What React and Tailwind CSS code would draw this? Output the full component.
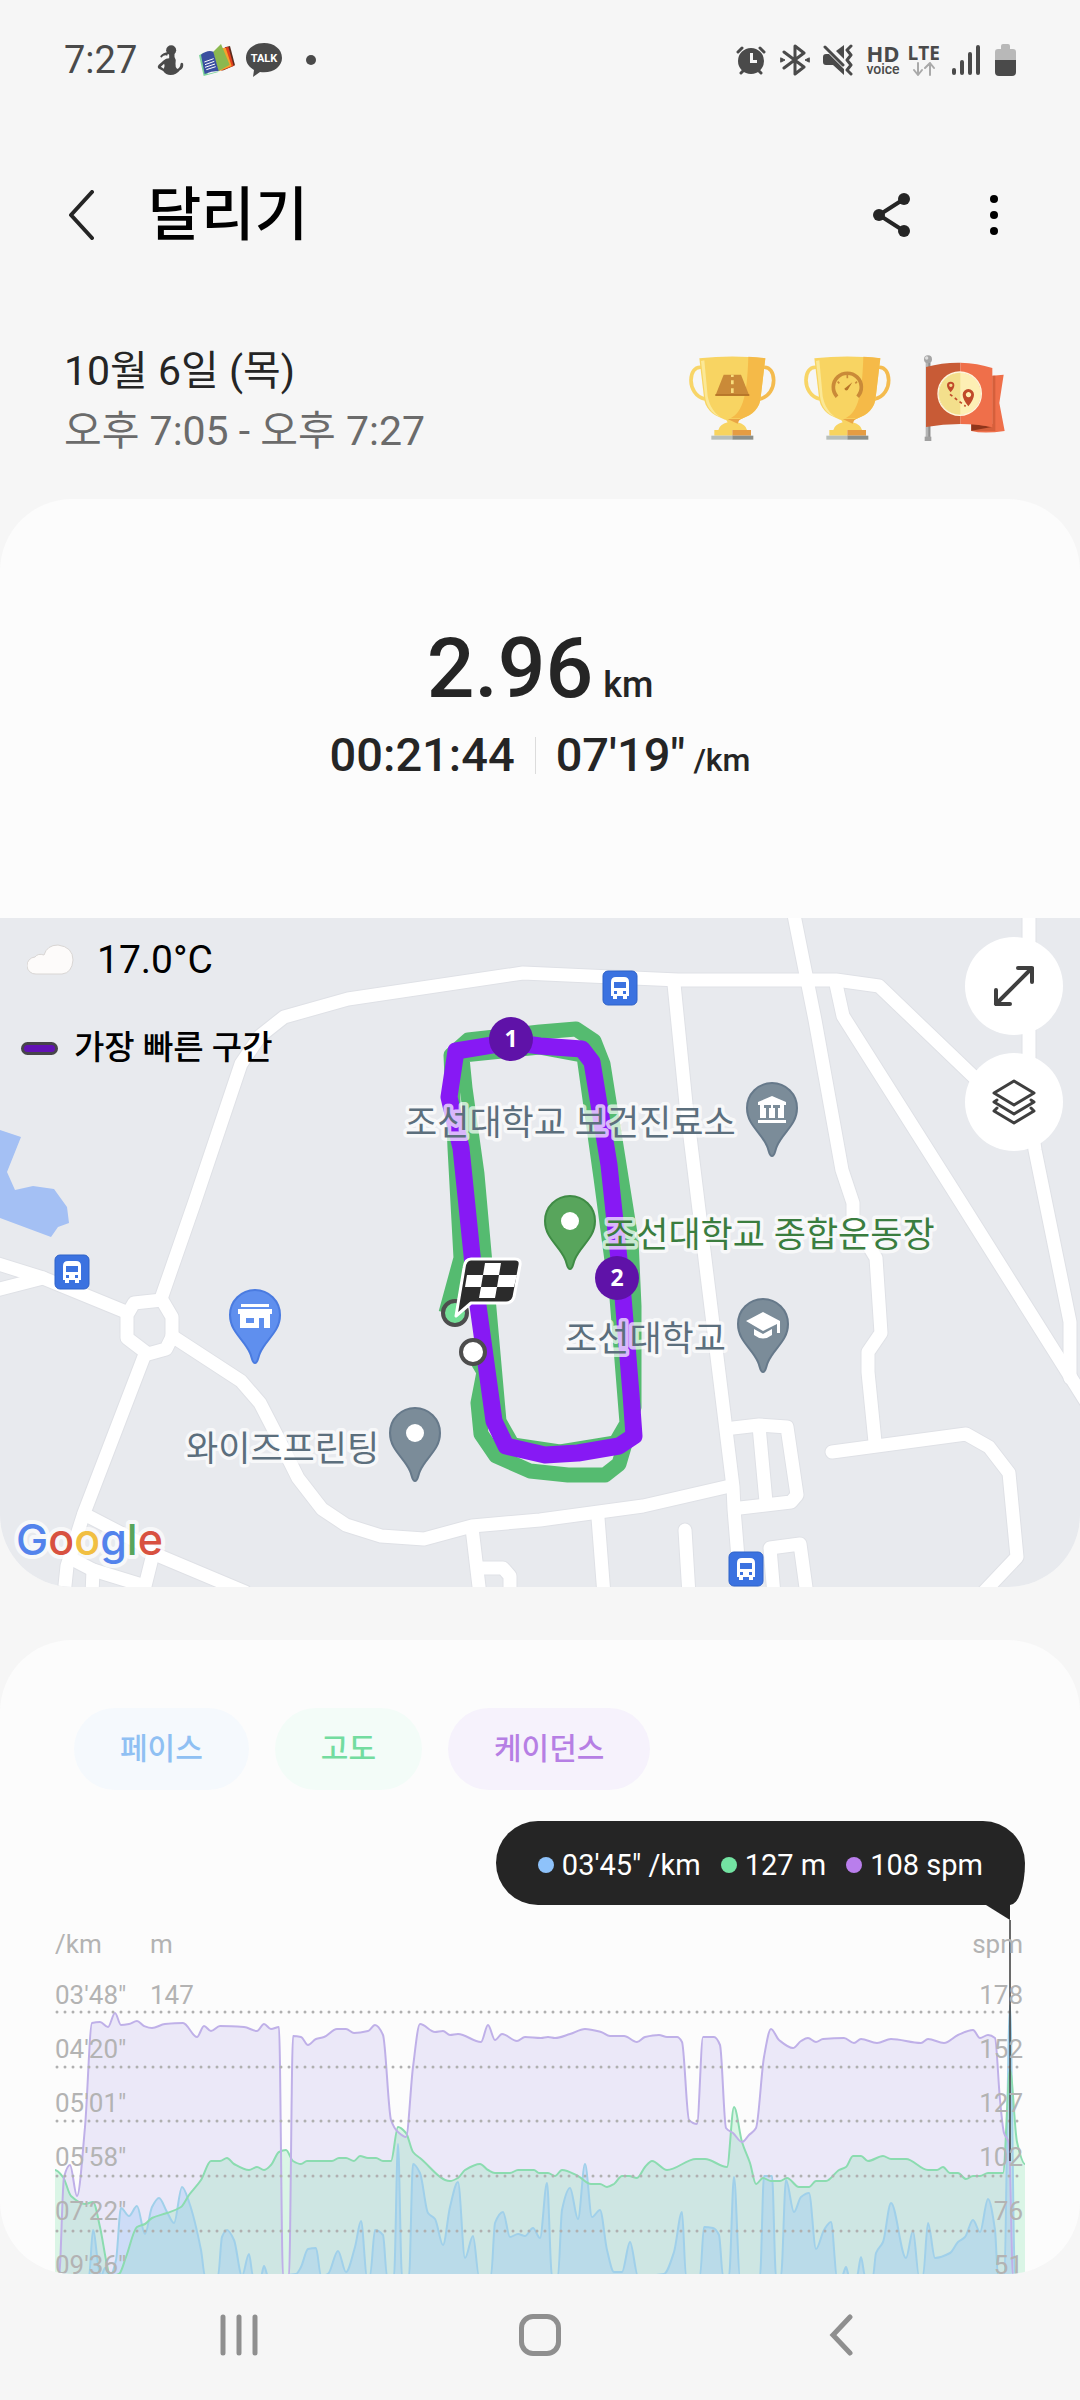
// src/pages/RunDetailPage.jsx
import { useState } from "react";

const ROADS = [
  "M162 378 L195 283 L241 146 L260 118 L284 99 L348 81 L523 55 L678 62 L836 62 L879 68 L975 160 L1030 200",
  "M1029 -8 V190 L1035 232 L1070 404 V460",
  "M836 66 L843 98 L960 283 L1090 490",
  "M793 -8 L815 102 L842 252 L853 285 V302 L876 340 L881 415 L868 434 V454 L875 524",
  "M674 66 L686 186 L733 569 L734 591 L738 640",
  "M832 534 L966 516 L989 529 L1009 555 L1017 639 L981 677",
  "M172 418 L241 463 L260 485 L276 516 L298 560 L322 591 L346 607 L381 618 L424 621 L472 608 L540 602 L643 588 L730 568",
  "M-8 344 L43 360 L126 394",
  "M-8 373 L43 360",
  "M145 436 L84 595 L67 648 L64 677",
  "M84 596 L138 624 L157 637 L245 674",
  "M70 640 L93 652 L145 668 L152 640",
  "M93 652 L92 677",
  "M472 610 L480 677",
  "M480 650 L503 650 L510 658 V677",
  "M598 600 L604 677",
  "M685 612 L689 677",
  "M733 510 L759 507 L787 509 L797 577 L791 584 L740 590",
  "M759 508 L766 584",
  "M774 677 L770 630 L800 626 L807 677",
  "M134 385 L162 382 L172 399 V419 L166 431 L148 436 L127 420 V397 Z",
];

const GREEN_TRACK =
  "M446 395 L461 340 L455 230 L451 137 L468 122 L540 114 L576 111 L594 123 L603 146 L631 322 L634 388 V489 L624 529 L619 546 L605 557 H568 L530 553 L496 538 L481 516 L478 485 L484 454 L474 437";
const GREEN_LAP =
  "M463 140 L466 170 L478 256 L500 503 L513 526 L560 533 L615 524 L626 505 L616 380 L600 260 L583 138 L540 130 L463 138";
const PURPLE_TRACK =
  "M456 133 L449 179 L461 230 L475 366 L494 503 L506 528 L545 537 L578 535 L619 528 L634 518 L631 476 L623 379 L609 247 L592 144 L582 131 L540 128 L511 124 Z";

const PIN_COLORS = {
  gray: ["#7b8c99", "#66798a"],
  green: ["#58a55c", "#3f8b45"],
  blue: ["#5f8fee", "#4a7be0"],
};

const CADENCE = [
  [4, 356], [9, 257], [15, 245], [22, 276], [30, 207], [37, 103], [45, 102], [53, 107], [60, 93], [66, 105], [74, 104],
  [82, 101], [89, 106], [97, 108], [110, 104], [128, 103], [142, 117], [149, 106], [156, 111], [165, 106], [189, 107],
  [202, 111], [209, 104], [216, 109], [224, 107], [228, 356], [234, 356], [238, 116], [246, 117], [253, 125], [261, 119],
  [269, 117], [282, 109], [291, 109], [299, 113], [313, 111], [320, 105], [328, 115], [336, 200], [343, 212], [351, 217],
  [358, 147], [365, 104], [380, 112], [388, 111], [395, 115], [403, 114], [426, 122], [433, 105], [440, 120], [447, 114],
  [462, 121], [470, 117], [486, 118], [493, 117], [500, 118], [515, 114], [530, 109], [546, 112], [555, 116], [569, 116],
  [582, 122], [590, 117], [604, 115], [612, 117], [622, 117], [627, 122], [634, 200], [642, 204], [648, 117], [659, 117],
  [665, 125], [671, 208], [678, 213], [687, 222], [694, 215], [701, 208], [709, 137], [716, 109], [724, 120], [738, 128],
  [746, 121], [753, 118], [761, 122], [768, 119], [789, 118], [799, 123], [806, 119], [822, 123], [836, 119], [866, 123],
  [873, 119], [889, 123], [903, 115], [918, 110], [925, 118], [933, 115], [940, 118], [945, 180], [949, 213], [954, 223],
  [958, 356],
];

const ALTITUDE = [
  [0, 250], [8, 257], [16, 276], [30, 284], [38, 282], [45, 307], [52, 345], [55, 356], [64, 354], [71, 337], [82, 307],
  [90, 304], [97, 298], [112, 293], [126, 287], [134, 275], [146, 260], [156, 241], [165, 241], [172, 238], [179, 244],
  [194, 250], [202, 247], [209, 250], [216, 245], [224, 232], [231, 230], [238, 241], [246, 244], [252, 241], [277, 241],
  [284, 238], [291, 238], [299, 241], [305, 236], [313, 238], [321, 238], [328, 241], [336, 241], [343, 207], [351, 213],
  [358, 232], [365, 238], [395, 261], [403, 258], [410, 250], [425, 244], [433, 250], [440, 253], [455, 253], [463, 250],
  [479, 250], [484, 253], [493, 253], [500, 256], [507, 250], [523, 256], [536, 264], [545, 264], [552, 267], [559, 264],
  [567, 256], [574, 256], [582, 258], [590, 247], [597, 241], [612, 250], [641, 239], [650, 239], [672, 247], [679, 187],
  [687, 222], [695, 243], [701, 264], [708, 258], [716, 261], [725, 261], [732, 258], [744, 267], [754, 267], [761, 261],
  [771, 261], [784, 250], [791, 247], [798, 236], [806, 236], [813, 241], [828, 236], [836, 239], [851, 239], [873, 250],
  [882, 250], [888, 247], [895, 253], [903, 253], [911, 259], [918, 256], [925, 256], [933, 253], [948, 253], [955, 150],
  [962, 222], [970, 244],
];

const PACE = [
  [34, 356], [38, 310], [44, 350], [46, 356], [50, 348], [55, 356], [61, 340], [66, 288], [74, 296], [82, 286], [90, 314],
  [97, 287], [104, 278], [112, 292], [119, 303], [127, 267], [134, 282], [146, 330], [150, 356], [163, 356], [167, 317],
  [172, 310], [179, 320], [187, 356], [194, 334], [198, 356], [206, 356], [209, 346], [213, 356], [241, 354], [246, 347],
  [253, 329], [261, 328], [266, 356], [273, 354], [283, 331], [291, 352], [300, 327], [306, 301], [312, 356], [315, 356],
  [320, 310], [328, 315], [332, 356], [339, 356], [343, 224], [347, 356], [354, 356], [358, 244], [365, 253], [373, 293],
  [380, 299], [388, 325], [395, 287], [403, 262], [410, 338], [418, 316], [424, 356], [436, 356], [440, 303], [448, 292],
  [455, 317], [463, 314], [470, 316], [478, 308], [485, 318], [492, 263], [497, 356], [503, 356], [507, 290], [515, 268],
  [523, 299], [530, 244], [537, 297], [545, 290], [552, 330], [559, 352], [567, 352], [575, 322], [583, 356], [609, 354],
  [619, 332], [627, 292], [631, 356], [645, 356], [649, 307], [658, 308], [664, 315], [668, 356], [674, 356], [679, 257],
  [685, 356], [705, 356], [709, 256], [717, 256], [721, 356], [726, 356], [731, 260], [739, 292], [746, 277], [754, 273],
  [761, 329], [769, 310], [776, 302], [782, 356], [787, 356], [791, 347], [794, 356], [802, 356], [806, 337], [810, 356],
  [818, 356], [821, 333], [828, 322], [836, 283], [851, 338], [858, 311], [864, 356], [868, 356], [873, 303], [880, 338],
  [895, 333], [903, 322], [910, 317], [918, 300], [925, 312], [933, 279], [940, 310], [943, 356], [949, 356], [955, 85],
  [960, 356],
];

const AXIS_ROWS = [
  { pace: "03'48\"", alt: "147", cadence: "178" },
  { pace: "04'20\"", alt: "", cadence: "152" },
  { pace: "05'01\"", alt: "", cadence: "127" },
  { pace: "05'58\"", alt: "", cadence: "102" },
  { pace: "07'22\"", alt: "", cadence: "76" },
  { pace: "09'36\"", alt: "", cadence: "51" },
];

const GRID_LINES = [92, 147, 201, 256, 311];

// Monotone cubic through the points, so peaks stay round and never overshoot
function smoothPath(points) {
  const slope = points.slice(1).map((p, i) => (p[1] - points[i][1]) / (p[0] - points[i][0]));
  const tangent = points.map((_, i) => {
    const a = slope[i - 1];
    const b = slope[i];
    if (a === undefined || b === undefined || a * b <= 0) return 0;
    return (2 * a * b) / (a + b);
  });
  let d = `M${points[0][0]} ${points[0][1]}`;
  for (let i = 1; i < points.length; i++) {
    const [x0, y0] = points[i - 1];
    const [x1, y1] = points[i];
    const h = (x1 - x0) / 3;
    d += ` C${x0 + h} ${y0 + h * tangent[i - 1]} ${x1 - h} ${y1 - h * tangent[i]} ${x1} ${y1}`;
  }
  return d;
}

function areaPath(points) {
  return `${smoothPath(points)} V360 H${points[0][0]} Z`;
}

function StatusBar() {
  return (
    <div className="flex h-[120px] items-center justify-between px-16 text-[#4a4a4a]">
      <div className="flex items-center">
        <span className="text-[38px] leading-10">7:27</span>
        <svg className="ml-5 h-[30px] w-[27px]" viewBox="0 0 80 90" fill="currentColor">
          <circle cx="42" cy="16" r="15" />
          <path d="M9 34 Q18 22 34 22 L30 32 Q22 28 12 38 Z" />
          <path
            fillRule="evenodd"
            d="M36 26 H52 V36 Q58 44 55 56 Q54 66 60 72 Q70 68 70 56 Q74 50 78 56 Q80 70 68 76 Q58 90 40 90 Q26 90 18 78 L3 70 Q0 65 4 60 L20 46 Q26 40 36 40 Z M11 65 L20 71 Q24 62 21 56 Z"
          />
        </svg>
        <svg className="ml-[14px] h-8 w-[38px]" viewBox="0 0 108 96">
          <path d="M78 10 L93 6 L108 64 L70 80 Z" fill="#5b2a1c" />
          <path d="M74 12 L88 8 L104 66 L66 80 Z" fill="#e2401f" />
          <path d="M66 12 L80 12 L98 66 L60 82 Z" fill="#f6a12c" />
          <path d="M0 34 L14 26 L26 90 L58 82 L58 84 L14 96 Z" fill="#7cd39a" />
          <path d="M42 24 L66 0 L92 62 L58 82 Z" fill="#8bb84f" />
          <path d="M6 32 Q26 16 43 23 L59 81 Q40 80 17 90 Z" fill="#3a4f9f" />
          <path d="M16 54 L44 44 M18 62 L46 52 M18 70 L48 60 M22 77 L50 68" stroke="#fff" strokeWidth="3" />
        </svg>
        <svg className="ml-[10px] h-[34px] w-9" viewBox="0 0 36 34">
          <path
            fill="currentColor"
            d="M18 0 C8 0 0 6 0 15 C0 20 3 24 8 27 L7 34 L14 29 C26 31 36 24 36 15 C36 6 28 0 18 0 Z"
          />
          <text x="18" y="19" textAnchor="middle" fill="#fff" className="text-[11px] font-bold">
            TALK
          </text>
        </svg>
        <span className="ml-6 size-[10px] rounded-full bg-[#4a4a4a]" />
      </div>

      <div className="flex items-center">
        <svg className="h-[30px] w-[30px]" viewBox="0 0 30 30" fill="currentColor">
          <path d="M2 7 L6 3 M28 7 L24 3 M5 28 L8 25 M25 28 L22 25" stroke="currentColor" strokeWidth="3" strokeLinecap="round" />
          <path
            fillRule="evenodd"
            d="M15 3 A13 13 0 1 0 15 29 A13 13 0 1 0 15 3 Z M14 8 H17 V15 H21 V18 H14 Z"
          />
        </svg>
        <svg className="ml-[14px] h-8 w-[30px]" viewBox="0 0 30 32" fill="none" stroke="currentColor" strokeWidth="3" strokeLinejoin="round" strokeLinecap="round">
          <path d="M4 8 L24 23 L15 30 V2 L24 9 L4 24" />
          <path d="M1 14 L5 16 L1 18 Z M29 14 L25 16 L29 18 Z" fill="currentColor" strokeWidth="1" />
        </svg>
        <svg className="ml-[13px] h-8 w-[31px]" viewBox="0 0 31 32" fill="currentColor">
          <path d="M0 13 Q0 10 3 10 H6 L21 25 V31 L10 21 H3 Q0 21 0 18 Z" />
          <path d="M21 1 V15 L13 7 Z" />
          <path d="M2 3 L20 21" stroke="currentColor" strokeWidth="3" strokeLinecap="round" />
          <path d="M28 2 L24 6 L28 11 L24 16 L28 21 L24 26 L28 30" fill="none" stroke="currentColor" strokeWidth="3" strokeLinejoin="round" strokeLinecap="round" />
        </svg>
        <span className="ml-3 flex flex-col items-center">
          <span className="font-['Open_Sans',sans-serif] text-[22px] leading-[17px] font-bold">HD</span>
          <span className="text-[14px] leading-[14px] font-medium">voice</span>
        </span>
        <span className="ml-2 flex flex-col items-center">
          <span className="font-['Open_Sans',sans-serif] text-[19px] leading-[17px] font-bold">LTE</span>
          <svg className="h-[14px] w-[22px]" viewBox="0 0 22 14" fill="none" stroke="#a9a9a9" strokeWidth="2" strokeLinecap="round" strokeLinejoin="round">
            <path d="M5 1 V13 M1 8 L5 13 L9 8 M17 13 V1 M12 6 L17 1 L21 6" />
          </svg>
        </span>
        <svg className="ml-3 h-[30px] w-7" viewBox="0 0 28 30" stroke="currentColor" strokeWidth="4" strokeLinecap="round">
          <path d="M2 25 V28 M10 17 V28 M18 9 V28 M26 2 V28" />
        </svg>
        <svg className="ml-[15px] h-8 w-[21px]" viewBox="0 0 21 32">
          <path d="M6 2 Q6 0 8 0 H13 Q15 0 15 2 V5 H18 Q21 5 21 8 V16 H0 V8 Q0 5 3 5 H6 Z" fill="#b8b8b8" />
          <path d="M0 16 H21 V28 Q21 32 17 32 H4 Q0 32 0 28 Z" fill="currentColor" />
        </svg>
      </div>
    </div>
  );
}

function Header() {
  return (
    <header className="flex h-[190px] items-center pr-[74px] pl-16">
      <button type="button" aria-label="뒤로" className="flex w-9 items-center">
        <svg className="h-[50px] w-9" viewBox="0 0 36 50" fill="none" stroke="#252525" strokeWidth="4" strokeLinecap="round" strokeLinejoin="round">
          <path d="M28 2 L7 25 L28 48" />
        </svg>
      </button>
      <h1 className="ml-12 flex-1 text-[58px] leading-[64px] font-medium text-black">달리기</h1>
      <button type="button" aria-label="공유">
        <svg className="h-[46px] w-10" viewBox="0 0 40 46" fill="#252525">
          <path d="M32 7 L7 23 L32 39" fill="none" stroke="#252525" strokeWidth="4" />
          <circle cx="32" cy="7" r="6" />
          <circle cx="7" cy="23" r="6" />
          <circle cx="32" cy="39" r="6" />
        </svg>
      </button>
      <button type="button" aria-label="더보기" className="ml-[70px]">
        <svg className="h-[46px] w-6" viewBox="0 0 24 46" fill="#000">
          <circle cx="12" cy="7" r="4" />
          <circle cx="12" cy="23" r="4" />
          <circle cx="12" cy="39" r="4" />
        </svg>
      </button>
    </header>
  );
}

function Trophy({ label, children }) {
  return (
    <svg className="h-[90px] w-[92px]" viewBox="0 0 276 270" role="img" aria-label={label}>
      <g fill="none" strokeWidth="11">
        <path d="M44 43 C22 40 12 60 12 82 C12 105 25 132 54 138" stroke="#f8d567" />
        <path d="M228 43 C250 40 260 60 260 82 C260 105 247 132 218 138" stroke="#f4bb4e" />
      </g>
      <path d="M37 16 Q136 5 235 16 L220 142 C212 178 184 190 158 200 H114 C88 190 60 178 52 142 Z" fill="#f8d462" />
      <path d="M184 11 Q212 12 235 16 L220 142 C212 178 184 190 158 200 H122 C165 182 180 140 184 11 Z" fill="#f5ba48" />
      <path d="M42 24 L52 22 L62 130 C68 160 82 180 100 192 C72 182 58 160 54 130 Z" fill="#fbe896" />
      <path d="M112 196 H160 Q154 202 152 208 Q176 214 180 231 H94 Q98 214 122 208 Q120 202 112 196 Z" fill="#f8d462" />
      <path d="M122 198 H160 Q154 204 152 212 Z" fill="#e9a545" />
      <path d="M82 231 H136 V248 H82 Z" fill="#f8d45f" />
      <path d="M136 231 H192 V248 H136 Z" fill="#e59c43" />
      <path d="M73 248 H136 V260 H73 Z" fill="#b7bfbc" />
      <path d="M136 248 H199 V260 H136 Z" fill="#8a8f8b" />
      {children}
    </svg>
  );
}

function RouteFlag() {
  return (
    <svg className="h-[90px] w-[92px]" viewBox="0 0 276 270" role="img" aria-label="경로">
      <path d="M26 28 H40 V252 H26 Z" fill="#b4b4b4" />
      <path d="M34 28 H40 V252 H34 Z" fill="#8f8f8f" />
      <circle cx="33" cy="19" r="12" fill="#a5a5a5" />
      <circle cx="29" cy="15" r="5" fill="#dedede" />
      <path d="M23 251 H43 V264 H23 Z" fill="#a0a0a0" />
      <path d="M226 68 L260 65 L247 150 L263 234 Q200 243 163 234 V213 H226 Z" fill="#ef6f4a" />
      <path d="M226 68 H235 V234 L163 234 V213 H226 Z" fill="#d55f3b" />
      <path d="M163 212 L224 222 Q190 228 163 233 Z" fill="#8f351b" />
      <path d="M27 42 Q78 28 130 29 V213 Q78 213 27 222 Z" fill="#c85b36" />
      <path d="M130 29 Q182 30 226 45 V223 Q182 213 130 213 Z" fill="#ef6f4a" />
      <circle cx="128" cy="122" r="64" fill="#fdefb4" />
      <path d="M130 58 A64 64 0 0 0 130 186 Z" fill="#f3df8c" />
      <circle cx="128" cy="122" r="65" fill="none" stroke="#fff6dc" strokeWidth="4" />
      <g fill="#c0492a">
        <path fillRule="evenodd" d="M101 118 Q90 106 90 97 A11 11 0 1 1 112 97 Q112 106 101 118 Z M101 92 a5 5 0 1 0 1 0 Z" />
        <path fillRule="evenodd" d="M154 160 Q137 138 137 125 A17 17 0 1 1 171 125 Q171 138 154 160 Z M154 117 a8 8 0 1 0 1 0 Z" />
      </g>
      <path d="M99 124 L146 160" stroke="#c0492a" strokeWidth="5" strokeDasharray="9 9" />
    </svg>
  );
}

function DateRow() {
  return (
    <section className="flex items-start justify-between px-16 pt-[31px] pb-[38px]">
      <div className="text-[41px] leading-[60px]">
        <p className="text-[#252525]">10월 6일 (목)</p>
        <p className="text-[#6b6b6b]">오후 7:05 - 오후 7:27</p>
      </div>
      <div className="mt-3 mr-[7px] flex gap-[23px]">
        <Trophy label="최장 거리">
          <path d="M110 65 H162 L187 128 H85 Z" fill="#ca8a38" />
          <path d="M85 124 H187 V128 H85 Z" fill="#b06f25" />
          <path d="M136 65 V72 M136 82 V94 M136 106 V120" stroke="#f8dc7c" strokeWidth="8" />
        </Trophy>
        <Trophy label="최고 속도">
          <path d="M105 131 A42 42 0 1 1 167 131" fill="none" stroke="#ca8a38" strokeWidth="11" />
          <path d="M136 66 V76 M107 86 L112 91 M165 86 L160 91" stroke="#ca8a38" strokeWidth="5" />
          <path d="M151 88 L137 111 Q130 115 127 107 Z" fill="#b87529" />
        </Trophy>
        <RouteFlag />
      </div>
    </section>
  );
}

function Summary() {
  return (
    <div className="flex flex-col items-center pt-[120px] pb-[133px] font-medium text-[#252525]">
      <p className="text-[84px] leading-[100px]">
        2.96
        <span className="ml-[10px] text-[36px] leading-none">km</span>
      </p>
      <div className="mt-[6px] flex items-center text-[47px] leading-[60px]">
        <span>00:21:44</span>
        <span className="mx-5 h-[37px] w-px bg-[#dcdcdc]" />
        <span>
          07'19"
          <span className="ml-2 text-[32px] leading-none">/km</span>
        </span>
      </div>
    </div>
  );
}

function Pin({ x, y, color, children }) {
  const [fill, stroke] = PIN_COLORS[color];
  return (
    <g transform={`translate(${x} ${y})`}>
      <path
        d="M0 48 C-3 48 -3 42 -5 38 C-11 24 -25 17 -25 0 A25 25 0 1 1 25 0 C25 17 11 24 5 38 C3 42 3 48 0 48 Z"
        fill={fill}
        stroke={stroke}
        strokeWidth="2"
      />
      {children || <circle r="9" fill="#fff" />}
    </g>
  );
}

function BusStop({ x, y }) {
  return (
    <g transform={`translate(${x} ${y})`}>
      <rect x="-17" y="-17" width="34" height="34" rx="5" fill="#3b72e0" stroke="#2f62c8" />
      <path
        fill="#fff"
        fillRule="evenodd"
        d="M-9 -6 Q-9 -11 -4 -11 H4 Q9 -11 9 -6 V8 H7 V11 H3 V8 H-3 V11 H-7 V8 H-9 Z M-6 -6 V0 H6 V-6 Z M-6 3 V6 H-3 V3 Z M3 3 V6 H6 V3 Z"
      />
    </g>
  );
}

function MapLabel({ x, y, color, children }) {
  return (
    <text
      x={x}
      y={y}
      fill={color}
      stroke="#fff"
      strokeOpacity="0.7"
      strokeWidth="7"
      strokeLinejoin="round"
      paintOrder="stroke"
      className="text-[35px]"
    >
      {children}
    </text>
  );
}

function KmMarker({ x, y, n }) {
  return (
    <g transform={`translate(${x} ${y})`}>
      <circle r="22" fill="#5f12a8" />
      <text y="8" textAnchor="middle" fill="#fff" className="font-['Open_Sans',sans-serif] text-[23px] font-bold">
        {n}
      </text>
    </g>
  );
}

function RouteMap() {
  return (
    <div className="relative h-[669px] bg-[#e8eaee]">
      <svg className="absolute inset-0 h-full w-full" viewBox="0 0 1080 669" preserveAspectRatio="xMidYMid slice">
        <path d="M0 212 L21 219 L7 254 L15 272 L33 268 L54 271 L67 289 L69 305 L58 309 L51 319 L0 300 Z" fill="#a4c0f4" />
        <g fill="none" strokeLinecap="round" strokeLinejoin="round">
          <g stroke="#dfe1e6" strokeWidth="15">
            {ROADS.map((d) => (
              <path key={d} d={d} />
            ))}
          </g>
          <g stroke="#fff" strokeWidth="13">
            {ROADS.map((d) => (
              <path key={d} d={d} />
            ))}
          </g>
        </g>

        {/* Track */}
        <g fill="none" strokeLinejoin="round">
          <path d={GREEN_LAP} stroke="#55bb70" strokeWidth="13" />
          <path d={GREEN_TRACK} stroke="#55bb70" strokeWidth="15" />
          <path d={PURPLE_TRACK} stroke="#8719f4" strokeWidth="17" />
        </g>

        <BusStop x={72} y={354} />
        <BusStop x={620} y={70} />
        <BusStop x={746} y={651} />

        <MapLabel x={405} y={217} color="#5c6f7d">조선대학교 보건진료소</MapLabel>
        <MapLabel x={604} y={329} color="#3a7d3f">조선대학교 종합운동장</MapLabel>
        <MapLabel x={565} y={433} color="#5c6f7d">조선대학교</MapLabel>
        <MapLabel x={186} y={543} color="#5c6f7d">와이즈프린팅</MapLabel>

        <Pin x={772} y={190} color="gray">
          <path
            fill="#fff"
            fillRule="evenodd"
            d="M-14 -6 L0 -12 L14 -6 V-3 H12 V10 H-12 V-3 H-14 Z M-8 -3 V0 H-6 V10 H-3 V0 H-1 V-3 Z M1 -3 V0 H3 V10 H6 V0 H8 V-3 Z M-14 12 H14 V15 H-14 Z"
          />
        </Pin>
        <Pin x={570} y={303} color="green" />
        <Pin x={763} y={406} color="gray">
          <path fill="#fff" d="M0 -12 L17 -3 V9 H14 V0 L0 7 L-17 -3 Z M-9 5 L0 10 L9 5 V11 Q0 18 -9 11 Z" />
        </Pin>
        <Pin x={415} y={515} color="gray" />
        <Pin x={255} y={397} color="blue">
          <path
            fill="#fff"
            fillRule="evenodd"
            d="M-14 -11 H14 V-8 H-14 Z M-17 -6 H17 V-1 H15 V13 H9 V3 H4 V13 H-15 V-1 H-17 Z M-9 3 V8 H-1 V3 Z"
          />
        </Pin>

        <KmMarker x={511} y={121} n="1" />
        <KmMarker x={617} y={360} n="2" />

        <circle cx="455" cy="395" r="12" fill="#74df96" stroke="#4d4d4d" strokeWidth="4" />
        <circle cx="473" cy="434" r="12" fill="#fff" stroke="#4d4d4d" strokeWidth="4" />

        {/* Finish flag */}
        <path
          d="M471 341 H515 Q521 341 520 347 L514 379 Q512 385 506 385 H471 L456 398 L464 350 Q465 341 471 341 Z"
          fill="#2b2b2b"
          stroke="#fff"
          strokeWidth="3"
          strokeLinejoin="round"
        />
        <g fill="#fff">
          <path d="M485 345 H501 L499 357 H483 Z" />
          <path d="M467 357 H483 L481 369 H465 Z" />
          <path d="M499 357 H517 L514 369 H497 Z" />
          <path d="M481 369 H497 L495 380 H479 Z" />
        </g>

        <text
          x="16"
          y="637"
          stroke="#fff"
          strokeOpacity="0.7"
          strokeWidth="8"
          strokeLinejoin="round"
          paintOrder="stroke"
          className="font-['Inter',sans-serif] text-[43px] font-medium"
        >
          <tspan fill="#5383ec">G</tspan>
          <tspan fill="#d85140">o</tspan>
          <tspan fill="#f1bf42">o</tspan>
          <tspan fill="#5383ec">g</tspan>
          <tspan fill="#58a55c">l</tspan>
          <tspan fill="#d85140">e</tspan>
        </text>
      </svg>

      <div className="relative flex items-start justify-between pt-[19px] pr-[17px] pl-[21px] text-black">
        <div>
          <p className="flex h-[46px] items-center text-[39px] leading-[46px]">
            <svg className="mr-[22px] ml-[6px] h-8 w-12" viewBox="0 0 48 32">
              <path
                d="M9 30 A8 8 0 0 1 8 13 Q11 9 17 11 Q20 1 31 1 Q46 3 46 16 Q45 29 35 30 Z"
                fill="#fdfbfa"
                stroke="#d9d6d4"
              />
            </svg>
            17.0°C
          </p>
          <p className="mt-[42px] flex h-[46px] items-center text-[33px] leading-[46px] font-medium">
            <span className="mr-4 h-[13px] w-[37px] rounded-full border-3 border-[#47454a] bg-[#6212b4]" />
            가장 빠른 구간
          </p>
        </div>
        <div className="flex flex-col gap-[18px]">
          <button type="button" aria-label="지도 확대" className="flex size-[98px] items-center justify-center rounded-full bg-white">
            <svg className="size-[42px]" viewBox="0 0 42 42" fill="none" stroke="#3f3f3f" strokeWidth="4" strokeLinecap="round" strokeLinejoin="round">
              <path d="M25 3 H39 V17 M39 3 L3 39 M3 25 V39 H17" />
            </svg>
          </button>
          <button type="button" aria-label="지도 유형" className="flex size-[98px] items-center justify-center rounded-full bg-white">
            <svg className="h-[46px] w-11" viewBox="0 0 44 46" fill="none" stroke="#3f3f3f" strokeWidth="3" strokeLinecap="round" strokeLinejoin="round">
              <path d="M22 2 L42 14 L22 26 L2 14 Z" />
              <path d="M5 21 L2 23 L22 35 L42 23 L39 21" />
              <path d="M5 29 L2 32 L22 44 L42 32 L39 29" />
            </svg>
          </button>
        </div>
      </div>
    </div>
  );
}

function ChartTooltip() {
  return (
    <div className="relative mt-[31px] mr-[55px] mb-[15px] ml-auto flex h-[84px] w-fit items-center gap-5 rounded-[42px] rounded-br-[15px_42px] bg-[#252525] px-[42px] pt-1 text-[29px] leading-9 text-white">
      <span className="flex items-center gap-2">
        <span className="size-4 rounded-full bg-[#8ec2fa]" />
        03'45" /km
      </span>
      <span className="flex items-center gap-2">
        <span className="size-4 rounded-full bg-[#73e3a2]" />
        127 m
      </span>
      <span className="flex items-center gap-2">
        <span className="size-4 rounded-full bg-[#b97eec]" />
        108 spm
      </span>
      <svg className="absolute top-full right-[15px] h-[15px] w-6" viewBox="0 0 24 15">
        <path d="M0 0 H24 V15 Z" fill="#252525" />
      </svg>
    </div>
  );
}

function Chart({ shown }) {
  return (
    <div className="relative mx-[55px] h-[354px] overflow-hidden text-[26px] leading-[30px] text-[#b3b3b3]">
      <svg className="absolute inset-0 h-full w-full" viewBox="0 0 970 354" preserveAspectRatio="none" fill="none">
        {shown.cadence && <path d={areaPath(CADENCE)} fill="#ac9cec" fillOpacity="0.2" />}
        {shown.altitude && <path d={areaPath(ALTITUDE)} fill="#72e2a2" fillOpacity="0.24" />}
        {shown.pace && <path d={areaPath(PACE)} fill="#8fc5f5" fillOpacity="0.32" />}
        <g strokeWidth="2">
          {shown.pace && <path d={smoothPath(PACE)} stroke="#a0d0ea" />}
          {shown.altitude && <path d={smoothPath(ALTITUDE)} stroke="#8bdcb0" />}
          {shown.cadence && <path d={smoothPath(CADENCE)} stroke="#bfb0e8" />}
        </g>
        {GRID_LINES.map((y) => (
          <path key={y} d={`M2 ${y} H970`} stroke="#b0b0b0" strokeWidth="3" strokeLinecap="round" strokeDasharray="0 8" />
        ))}
        <path d="M955 0 V241" stroke="#3a3a3a" strokeOpacity="0.75" strokeWidth="2" />
      </svg>
      <div className="relative pr-[2px]">
        <div className="flex h-12 items-center">
          <span className="w-[95px]">/km</span>
          <span>m</span>
          <span className="ml-auto">spm</span>
        </div>
        {AXIS_ROWS.map((row) => (
          <div key={row.pace} className="flex h-[54px] items-center">
            <span className="w-[95px]">{row.pace}</span>
            <span>{row.alt}</span>
            <span className="ml-auto">{row.cadence}</span>
          </div>
        ))}
      </div>
    </div>
  );
}

function ChartCard() {
  const [shown, setShown] = useState({ pace: true, altitude: true, cadence: true });
  const toggle = (key) => setShown((prev) => ({ ...prev, [key]: !prev[key] }));

  return (
    <section className="mt-[53px] overflow-hidden rounded-[72px] bg-[#fcfcfc] pt-[68px]">
      <div className="flex gap-[26px] px-[74px] text-[30px] leading-[82px] font-medium">
        <button
          type="button"
          aria-pressed={shown.pace}
          onClick={() => toggle("pace")}
          className="rounded-full bg-[#f5f9fd] px-[46px] text-[#8fc0f3]"
        >
          페이스
        </button>
        <button
          type="button"
          aria-pressed={shown.altitude}
          onClick={() => toggle("altitude")}
          className="rounded-full bg-[#f3fcf8] px-[46px] text-[#73dca0]"
        >
          고도
        </button>
        <button
          type="button"
          aria-pressed={shown.cadence}
          onClick={() => toggle("cadence")}
          className="rounded-full bg-[#f6f2fc] px-[46px] text-[#b67fe4]"
        >
          케이던스
        </button>
      </div>
      <ChartTooltip />
      <Chart shown={shown} />
    </section>
  );
}

function NavBar() {
  return (
    <nav className="flex h-[126px] items-center px-[88px] pb-1">
      <button type="button" aria-label="최근 앱" className="flex flex-1 justify-center">
        <svg className="h-[42px] w-10" viewBox="0 0 40 42" stroke="#8f8f8f" strokeWidth="5" strokeLinecap="round">
          <path d="M4 3 V39 M20 3 V39 M36 3 V39" />
        </svg>
      </button>
      <button type="button" aria-label="홈" className="flex flex-1 justify-center">
        <span className="size-[42px] rounded-[14px] border-5 border-[#8f8f8f]" />
      </button>
      <button type="button" aria-label="뒤로 가기" className="flex flex-1 justify-center">
        <svg className="h-[42px] w-6" viewBox="0 0 24 42" fill="none" stroke="#8f8f8f" strokeWidth="5" strokeLinecap="round">
          <path d="M21 3 L4 21 L21 39" />
        </svg>
      </button>
    </nav>
  );
}

export default function App() {
  return (
    <div className="min-h-screen bg-[#f6f6f6] font-['Roboto','Noto_Sans_CJK_KR',sans-serif]">
      <StatusBar />
      <Header />
      <main>
        <DateRow />
        <section className="overflow-hidden rounded-[72px] bg-[#fcfcfc]">
          <Summary />
          <RouteMap />
        </section>
        <ChartCard />
      </main>
      <NavBar />
    </div>
  );
}
